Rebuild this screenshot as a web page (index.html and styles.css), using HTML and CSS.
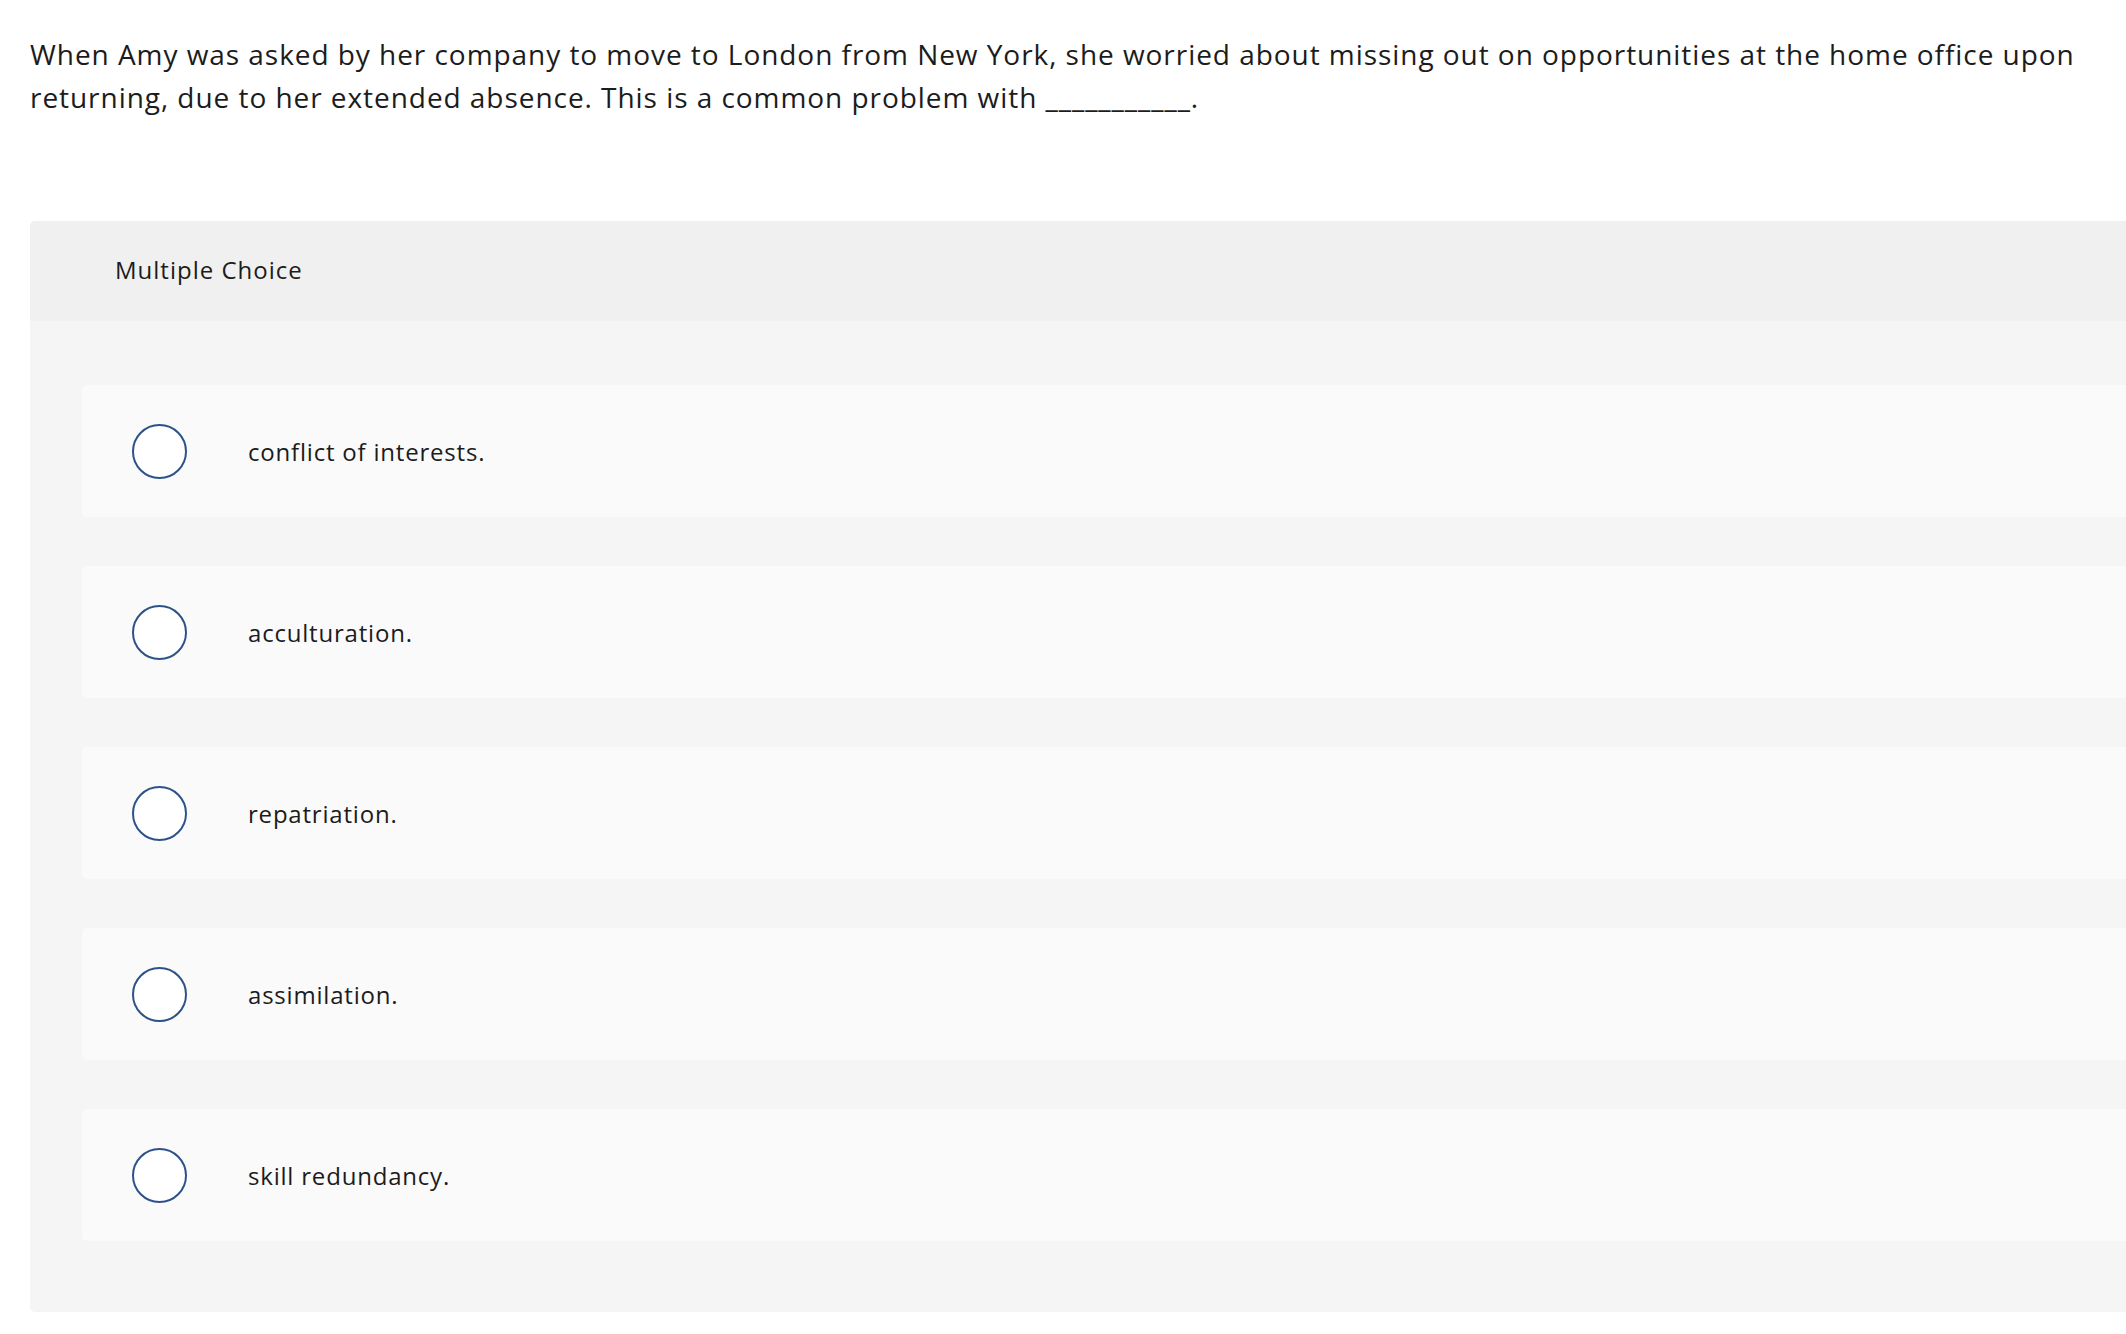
FILE: index.html
```html
<!DOCTYPE html>
<html lang="en">
<head>
<meta charset="utf-8">
<title>Multiple Choice</title>
<link rel="stylesheet" href="styles.css">
</head>
<body>
<main class="page">
  <p class="question">When Amy was asked by her company to move to London from New York, she worried about missing out on opportunities at the home office upon returning, due to her extended absence. This is a common problem with ___________.</p>
  <section class="card">
    <header class="card-header">Multiple Choice</header>
    <div class="card-body">
      <label class="option"><span class="radio"></span><span class="option-text">conflict of interests.</span></label>
      <label class="option"><span class="radio"></span><span class="option-text">acculturation.</span></label>
      <label class="option"><span class="radio"></span><span class="option-text">repatriation.</span></label>
      <label class="option"><span class="radio"></span><span class="option-text">assimilation.</span></label>
      <label class="option"><span class="radio"></span><span class="option-text">skill redundancy.</span></label>
    </div>
  </section>
</main>
</body>
</html>
```
FILE: styles.css
```css
html, body {
  margin: 0;
  padding: 0;
  background: #ffffff;
}
body {
  font-family: "Open Sans", "Noto Sans", sans-serif;
  color: #1c1c1c;
  overflow: hidden;
}
.page {
  padding: 33px 0 0 30px;
}
.question {
  margin: 0;
  padding-right: 30px;
  font-size: 28px;
  line-height: 43px;
  letter-spacing: 0.95px;
  color: #1c1c1c;
}
.card {
  margin-top: 102px;
  border-radius: 5px 0 0 5px;
  overflow: hidden;
  background: #f5f5f5;
}
.card-header {
  height: 100px;
  display: flex;
  align-items: center;
  padding: 0 0 3px 85px;
  box-sizing: border-box;
  background: #f0f0f0;
  font-size: 24px;
  letter-spacing: 1px;
  color: #1c1c1c;
}
.card-body {
  display: flex;
  flex-direction: column;
  gap: 49px;
  padding: 64px 0 71px 52px;
}
.option {
  height: 132px;
  display: flex;
  align-items: center;
  gap: 61px;
  padding-left: 50px;
  background: #fafafa;
  border-radius: 5px 0 0 5px;
  cursor: pointer;
}
.radio {
  flex: none;
  width: 55px;
  height: 55px;
  box-sizing: border-box;
  border: 2px solid #2d5289;
  border-radius: 50%;
  background: #ffffff;
}
.option-text {
  font-size: 24px;
  letter-spacing: 0.8px;
  color: #1c1c1c;
}
```
